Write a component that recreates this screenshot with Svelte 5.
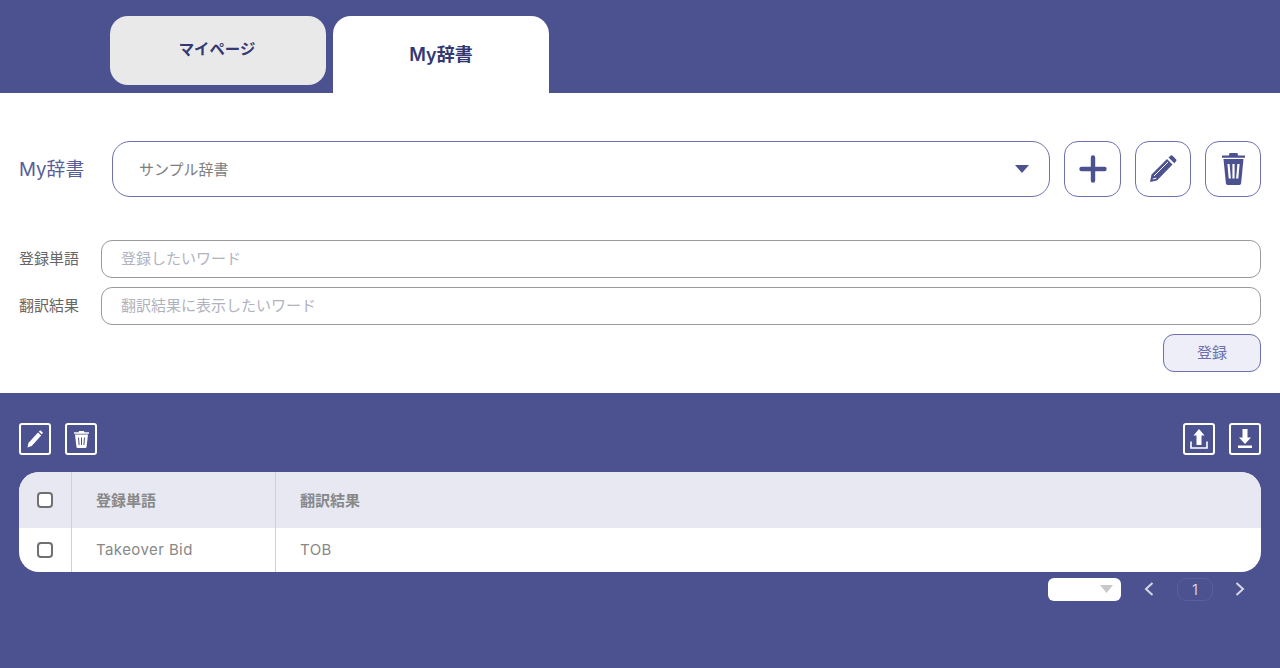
<script>
  const tabs = [
    { label: 'マイページ', active: false },
    { label: 'My辞書', active: true }
  ];
</script>

<div class="page">
  <nav class="tabs">
    {#each tabs as t}
      <div class="tab" class:active={t.active}><span>{t.label}</span></div>
    {/each}
  </nav>

  <section class="editor">
    <div class="dict-row">
      <span class="dict-label">My辞書</span>
      <div class="dict-select">
        <span>サンプル辞書</span>
        <svg class="caret" width="14" height="8" viewBox="0 0 14 8"><path d="M0 0h14L7 8z" fill="#4c5190" /></svg>
      </div>
      <button class="icon-btn plus" aria-label="追加">
        <svg width="28" height="28" viewBox="0 0 28 28"><path d="M14 2.500v23M2.500 14h23" stroke="#4c5190" stroke-width="4.400" stroke-linecap="round" /></svg>
      </button>
      <button class="icon-btn" aria-label="編集">
        <svg width="28" height="28" viewBox="0 0 28 28">
          <path fill="#4c5190" d="M1 27l1.500-7.500L18 4l5.500 5.500L8 25.500zM19.500 2.500L21.500.8a1.500 1.500 0 0 1 2 0l3.500 3.500a1.500 1.500 0 0 1 0 2l-1.700 2z" />
          <path d="M5 21L19 7M3.800 24l3.500-.8" stroke="#fff" stroke-width="1" fill="none" />
        </svg>
      </button>
      <button class="icon-btn" aria-label="削除">
        <svg width="23" height="32" viewBox="0 0 23 32">
          <path fill="#4c5190" d="M7.500 0h8l.5 2.500h7v2.200H0V2.500h7zM1.500 6h20l-2.400 24.300a1.800 1.800 0 0 1-1.800 1.700H5.700a1.800 1.800 0 0 1-1.800-1.700z" />
          <path d="M6.500 11l1.300 14.500M11.500 11v14.500M16.500 11l-1.300 14.500" stroke="#fff" stroke-width="2.200" fill="none" />
        </svg>
      </button>
    </div>

    <div class="field-row">
      <label for="word">登録単語</label>
      <input id="word" placeholder="登録したいワード" />
    </div>
    <div class="field-row second">
      <label for="result">翻訳結果</label>
      <input id="result" placeholder="翻訳結果に表示したいワード" />
    </div>
    <div class="submit-row">
      <button class="submit">登録</button>
    </div>
  </section>

  <section class="list">
    <div class="toolbar">
      <div class="group">
        <button class="tool" aria-label="編集">
          <svg width="16" height="18" viewBox="0 0 16 18"><path fill="#fff" d="M.5 17.500l.9-4.500L11 2.500l3.200 3L4.700 16zM11.800 1.700l1-1a.9.9 0 0 1 1.200 0l1.500 1.500a.9.9 0 0 1 0 1.200l-.7.800z" /></svg>
        </button>
        <button class="tool" aria-label="削除">
          <svg width="15" height="17" viewBox="0 0 15 17">
            <path fill="#fff" d="M5 0h5l.4 1.200H15v1.500H0V1.200h4.600zM1 3.500h13l-1.400 12a1.500 1.500 0 0 1-1.500 1.500H3.900a1.500 1.500 0 0 1-1.500-1.500z" />
            <path d="M4.500 6.500l.6 7.500M7.500 6.500V14M10.500 6.500L9.900 14" stroke="#4c5190" stroke-width="1" fill="none" />
          </svg>
        </button>
      </div>
      <div class="group">
        <button class="tool" aria-label="アップロード">
          <svg width="18" height="20" viewBox="0 0 18 20"><path fill="#fff" d="M9 0l5.500 6.500h-3V16h-5V6.500h-3z" /><path d="M1 12.500V19h16v-6.500" fill="none" stroke="#fff" stroke-width="1.600" /></svg>
        </button>
        <button class="tool" aria-label="ダウンロード">
          <svg width="18" height="20" viewBox="0 0 18 20"><path fill="#fff" d="M6.500 0h5v8.500h3.500L9 15 3 8.500h3.500zM2 16.500h14V19H2z" /></svg>
        </button>
      </div>
    </div>

    <table>
      <thead>
        <tr>
          <th class="check"><span class="box"></span></th>
          <th class="word">登録単語</th>
          <th>翻訳結果</th>
        </tr>
      </thead>
      <tbody>
        <tr>
          <td class="check"><span class="box"></span></td>
          <td class="word">Takeover Bid</td>
          <td>TOB</td>
        </tr>
      </tbody>
    </table>

    <div class="pager">
      <div class="size">
        <svg width="13" height="8" viewBox="0 0 13 8"><path d="M0 0h13L6.500 8z" fill="#c8c8c8" /></svg>
      </div>
      <svg class="chev first" width="10" height="14" viewBox="0 0 10 14"><path d="M8.500 1L2 7l6.500 6" fill="none" stroke="#d6d7e4" stroke-width="2" /></svg>
      <span class="num">1</span>
      <svg class="chev last" width="10" height="14" viewBox="0 0 10 14"><path d="M1.500 1L8 7l-6.500 6" fill="none" stroke="#d6d7e4" stroke-width="2" /></svg>
    </div>
  </section>
</div>

<style>
  :global(body) {
    margin: 0;
    background: #4c5190;
  }
  .page {
    height: 668px;
    display: flex;
    flex-direction: column;
    font-family: "Inter", "Noto Sans CJK JP", sans-serif;
    overflow: hidden;
  }
  button {
    font-family: inherit;
    padding: 0;
    cursor: pointer;
  }
  .tabs {
    height: 93px;
    box-sizing: border-box;
    padding: 16px 0 0 110px;
    display: flex;
    gap: 7px;
    align-items: flex-start;
  }
  .tab {
    width: 216px;
    height: 69px;
    box-sizing: border-box;
    background: #e9e9e9;
    border-radius: 18px;
    display: flex;
    align-items: center;
    justify-content: center;
    padding: 0 2px 6px 0;
    font-size: 15.400px;
    font-weight: 700;
    color: #333873;
  }
  .tab.active {
    height: 77px;
    background: #fff;
    border-radius: 18px 18px 0 0;
    font-size: 18px;
    font-weight: 600;
    padding: 0 0 3px;
  }
  .editor {
    background: #fff;
    height: 300px;
    box-sizing: border-box;
    padding: 48px 19px 0;
  }
  .dict-row {
    display: flex;
    align-items: center;
  }
  .dict-label {
    width: 93px;
    font-size: 18.800px;
    color: #585d9c;
    padding-bottom: 4px;
  }
  .dict-select {
    flex: 1;
    height: 56px;
    box-sizing: border-box;
    border: 1px solid #6c70ae;
    border-radius: 18px;
    display: flex;
    align-items: center;
    justify-content: space-between;
    padding: 0 20px 0 26px;
    font-size: 15px;
    color: #7d7d7d;
    margin-right: 14px;
  }
  .dict-select span {
    padding-bottom: 2px;
  }
  .icon-btn {
    width: 56px;
    height: 56px;
    box-sizing: border-box;
    border: 1px solid #6c70ae;
    border-radius: 14px;
    background: #fff;
    display: flex;
    align-items: center;
    justify-content: center;
    margin-left: 14px;
  }
  .icon-btn.plus {
    width: 57px;
    margin-left: 0;
  }
  .field-row {
    display: flex;
    align-items: center;
    margin-top: 43px;
  }
  .field-row.second {
    margin-top: 9px;
  }
  .field-row label {
    width: 82px;
    font-size: 15px;
    color: #666;
    padding-bottom: 3px;
  }
  .field-row input {
    flex: 1;
    height: 38px;
    box-sizing: border-box;
    border: 1px solid #9a9a9a;
    border-radius: 11px;
    padding: 0 19px 2px;
    font-family: inherit;
    font-size: 15px;
    outline: none;
  }
  .field-row input::placeholder {
    color: #b0b3bf;
  }
  .submit-row {
    display: flex;
    justify-content: flex-end;
    margin-top: 9px;
  }
  .submit {
    width: 98px;
    height: 38px;
    box-sizing: border-box;
    border: 1px solid #6c70ae;
    border-radius: 11px;
    background: #edeef7;
    color: #6c70ae;
    font-size: 15px;
    padding-bottom: 3px;
  }
  .list {
    flex: 1;
    padding: 30px 19px 0;
  }
  .toolbar {
    display: flex;
    justify-content: space-between;
  }
  .group {
    display: flex;
    gap: 14px;
  }
  .tool {
    width: 32px;
    height: 32px;
    box-sizing: border-box;
    border: 2px solid #fff;
    border-radius: 3px;
    background: transparent;
    display: flex;
    align-items: center;
    justify-content: center;
  }
  table {
    width: 100%;
    margin-top: 17px;
    border-collapse: separate;
    border-spacing: 0;
    background: #fff;
    border-radius: 20px;
    overflow: hidden;
    table-layout: fixed;
    color: #888;
    font-size: 15px;
  }
  th, td {
    text-align: left;
    padding: 0 0 2px 24px;
    font-weight: 400;
  }
  th {
    height: 56px;
    box-sizing: border-box;
    background: #e7e8f1;
    font-weight: 700;
    font-size: 15px;
  }
  td {
    height: 44px;
    box-sizing: border-box;
    letter-spacing: 0.42px;
  }
  .check {
    width: 52px;
    padding: 0;
    text-align: center;
    border-right: 1px solid #cfcfd4;
    box-sizing: content-box;
  }
  .word {
    width: 204px;
    box-sizing: border-box;
    border-right: 1px solid #cfcfd4;
  }
  .box {
    display: block;
    width: 12px;
    height: 12px;
    margin: 0 auto;
    border: 2px solid #707070;
    border-radius: 4px;
    background: #fff;
  }
  .pager {
    display: flex;
    align-items: center;
    justify-content: flex-end;
    margin-top: 5px;
    height: 24px;
  }
  .size {
    width: 73px;
    height: 23px;
    background: #fff;
    border-radius: 6px;
    display: flex;
    align-items: center;
    justify-content: flex-end;
    padding-right: 8px;
    box-sizing: border-box;
  }
  .chev.first {
    margin-left: 23px;
  }
  .num {
    width: 36px;
    height: 23px;
    margin: 0 22px 0 23px;
    box-sizing: border-box;
    border: 1px solid #5a5f9a;
    border-radius: 9px;
    color: #e4e5ef;
    font-size: 15px;
    font-weight: 300;
    display: flex;
    align-items: center;
    justify-content: center;
  }
  .chev.last {
    margin-right: 16px;
  }
</style>
